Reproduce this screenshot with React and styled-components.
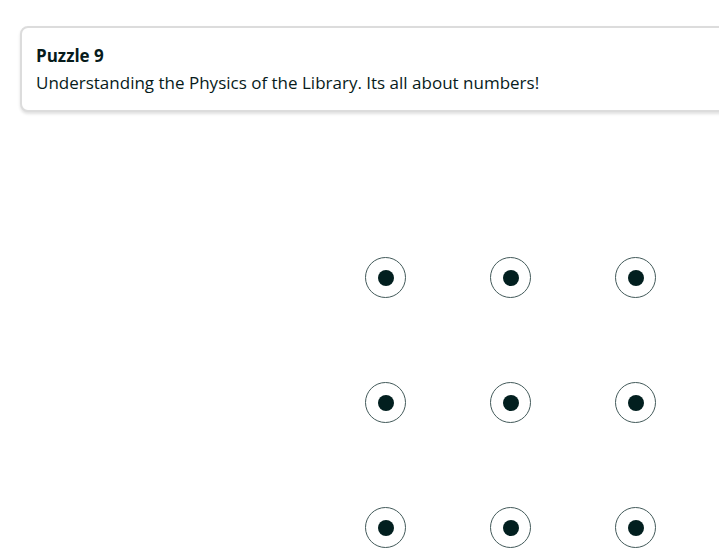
import React from "react";
import styled, { createGlobalStyle } from "styled-components";

const GlobalStyle = createGlobalStyle`
  html, body {
    margin: 0;
    padding: 0;
    background: #ffffff;
    overflow: hidden;
  }
  body {
    font-family: "Open Sans", "Noto Sans", sans-serif;
    color: #071b1b;
  }
`;

const Page = styled.div`
  width: 719px;
  height: 559px;
  padding-top: 26px;
  box-sizing: border-box;
  overflow: hidden;
`;

const Card = styled.div`
  margin-left: 20px;
  width: 740px;
  box-sizing: border-box;
  border: 2px solid #dcdcdc;
  border-radius: 8px;
  box-shadow: 0 2px 3px rgba(0, 0, 0, 0.12);
  padding: 17px 14px 16px;
  background: #fff;
`;

const Title = styled.div`
  font-weight: 700;
  font-size: 17px;
  line-height: 22px;
`;

const Text = styled.div`
  font-size: 17px;
  line-height: 22px;
  margin-top: 5px;
`;

const Board = styled.div`
  margin-top: 103px;
  margin-left: 323px;
  display: grid;
  grid-template-columns: repeat(3, 125px);
  grid-auto-rows: 125px;
`;

const Cell = styled.div`
  display: flex;
  align-items: center;
  justify-content: center;
`;

const Ring = styled.div`
  width: 39px;
  height: 39px;
  border: 1px solid #435a5a;
  border-radius: 50%;
  display: flex;
  align-items: center;
  justify-content: center;
`;

const Dot = styled.div`
  width: 16px;
  height: 16px;
  border-radius: 50%;
  background: #021f1f;
`;

export default function App() {
  const cells = Array.from({ length: 9 });
  return (
    <Page>
      <GlobalStyle />
      <Card>
        <Title>Puzzle 9</Title>
        <Text>Understanding the Physics of the Library. Its all about numbers!</Text>
      </Card>
      <Board>
        {cells.map((_, i) => (
          <Cell key={i}>
            <Ring>
              <Dot />
            </Ring>
          </Cell>
        ))}
      </Board>
    </Page>
  );
}
